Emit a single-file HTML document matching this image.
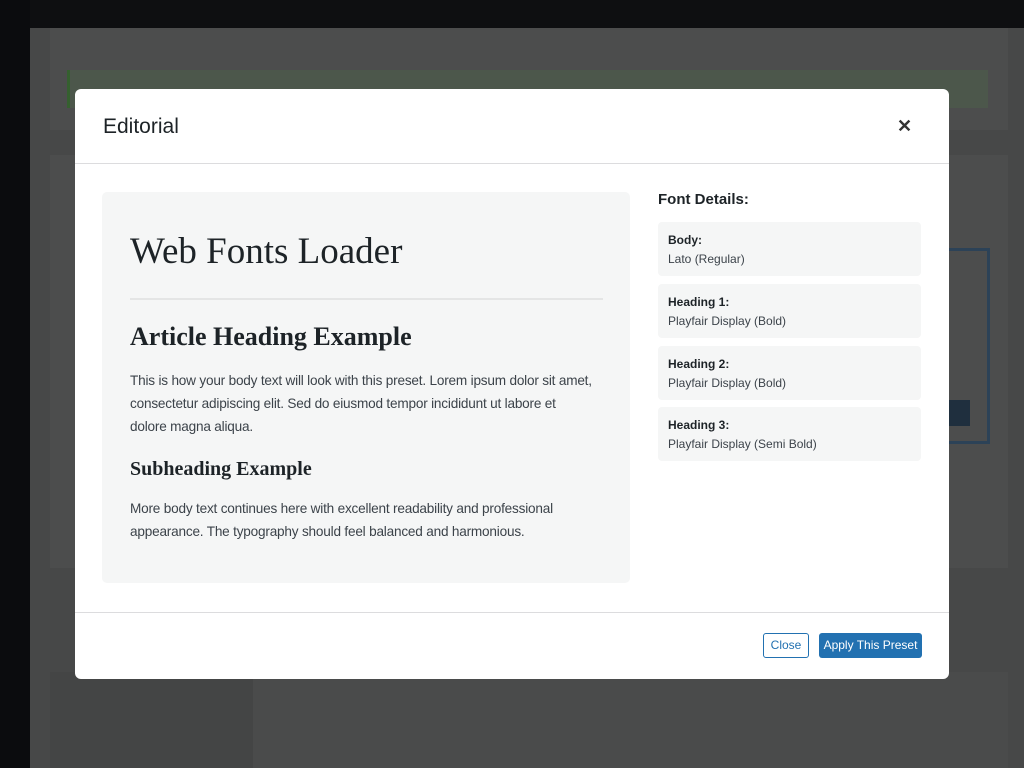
<!DOCTYPE html>
<html><head><meta charset="utf-8"><style>
*{box-sizing:border-box;margin:0;padding:0}
body{width:1024px;height:768px;overflow:hidden;background:#474848;font-family:"Liberation Sans",sans-serif;position:relative}
.abs{position:absolute}
.modal{position:absolute;left:75px;top:89px;width:874px;height:590px;background:#fff;border-radius:6px;overflow:hidden}
.title{position:absolute;left:28px;top:26px;font-size:21px;color:#1d2327}
.x{position:absolute;left:822px;top:27px;font-size:18px;color:#333;font-weight:bold}
.hline{position:absolute;left:0;width:874px;height:1px;background:#dcdcde}
.prev{position:absolute;left:27px;top:103px;width:528px;height:391px;background:#f5f6f6;border-radius:5px}
.serif{font-family:"Liberation Serif",serif;color:#1d2327;position:absolute;left:28px;white-space:nowrap}
.p{position:absolute;left:28px;font-size:13.6px;line-height:23px;color:#3c434a;width:490px;letter-spacing:-0.2px;white-space:nowrap}
.fd{position:absolute;left:583px;top:102px;font-size:15px;color:#1d2327;font-weight:bold}
.card{position:absolute;left:583px;width:263px;height:54px;background:#f5f6f6;border-radius:4px;padding:9px 10px;font-size:12px;line-height:19px;color:#3c434a}
.card b{color:#1d2327}
.btn{position:absolute;top:544px;height:25px;border-radius:3px;font-size:12px;line-height:23px;text-align:center}
</style></head><body>
<div class="abs" style="left:0;top:0;width:1024px;height:28px;background:#0e0f11"></div>
<div class="abs" style="left:0;top:0;width:30px;height:768px;background:#0b0c0e"></div>
<div class="abs" style="left:50px;top:28px;width:958px;height:102px;background:#4c4d4d"></div>
<div class="abs" style="left:67px;top:70px;width:921px;height:38px;background:#4c574b;border-left:3px solid #35602f"></div>
<div class="abs" style="left:50px;top:155px;width:958px;height:413px;background:#4c4d4d"></div>
<div class="abs" style="left:940px;top:248px;width:50px;height:196px;border:3px solid #2c4257;border-left:none"></div>
<div class="abs" style="left:940px;top:400px;width:30px;height:26px;background:#1f2f3e"></div>
<div class="abs" style="left:50px;top:672px;width:958px;height:96px;background:#4a4b4b"></div>
<div class="abs" style="left:50px;top:672px;width:203px;height:96px;background:#444545"></div>
<div class="modal">
<div class="title">Editorial</div>
<div class="x">✕</div>
<div class="hline" style="top:74px"></div>
<div class="prev">
<div class="serif" style="top:38px;font-size:37px">Web Fonts Loader</div>
<div class="abs" style="left:28px;top:106px;width:473px;height:2px;background:#e4e5e5"></div>
<div class="serif" style="top:130px;font-size:26px;font-weight:bold">Article Heading Example</div>
<div class="p" style="top:177px">This is how your body text will look with this preset. Lorem ipsum dolor sit amet,<br>consectetur adipiscing elit. Sed do eiusmod tempor incididunt ut labore et<br>dolore magna aliqua.</div>
<div class="serif" style="top:266px;font-size:20px;font-weight:bold">Subheading Example</div>
<div class="p" style="top:305px">More body text continues here with excellent readability and professional<br>appearance. The typography should feel balanced and harmonious.</div>
</div>
<div class="fd">Font Details:</div>
<div class="card" style="top:133px"><b>Body:</b><br>Lato (Regular)</div>
<div class="card" style="top:195px"><b>Heading 1:</b><br>Playfair Display (Bold)</div>
<div class="card" style="top:257px"><b>Heading 2:</b><br>Playfair Display (Bold)</div>
<div class="card" style="top:318px"><b>Heading 3:</b><br>Playfair Display (Semi Bold)</div>
<div class="hline" style="top:523px"></div>
<div class="btn" style="left:688px;width:46px;border:1px solid #2271b1;color:#2271b1">Close</div>
<div class="btn" style="left:744px;width:103px;background:#2271b1;color:#fff;line-height:25px">Apply This Preset</div>
</div>
</body></html>
